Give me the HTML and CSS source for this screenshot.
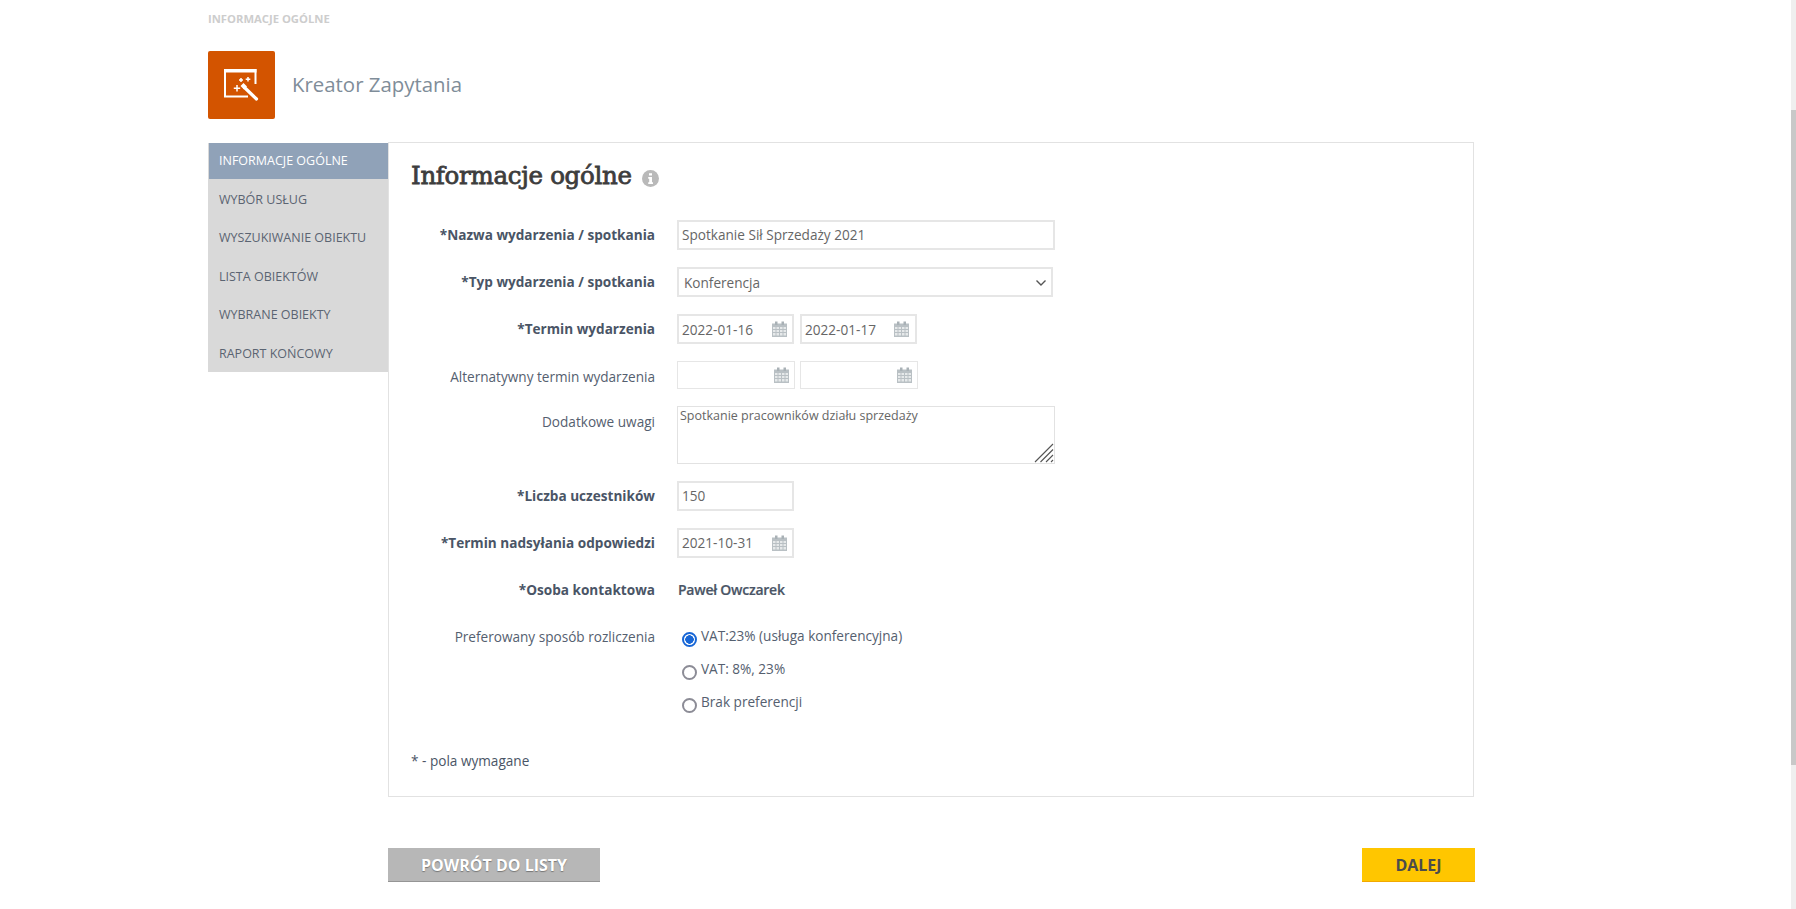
FILE: index.html
```html
<!DOCTYPE html>
<html lang="pl">
<head>
<meta charset="utf-8">
<title>Kreator Zapytania</title>
<link rel="stylesheet" href="styles.css">
</head>
<body>
<div class="page">
  <div class="crumb">INFORMACJE OGÓLNE</div>
  <header class="head">
    <div class="logo">
      <svg width="67" height="68" viewBox="0 0 67 68" fill="none">
        <path d="M17 18v27.500h23M47.500 18v15" stroke="#fff" stroke-width="2"/>
        <path d="M16 18h32.500v3.500H16z" fill="#fff"/>
        <path d="M36.500 36.500L48.500 48" stroke="#fff" stroke-width="3.200" stroke-linecap="round"/>
        <path d="M32.500 35l3-3 3.500 3.500-3 3z" fill="#fff"/>
        <path d="M29 34v6.400M25.800 37.200h6.400M33 27v4M31 29h4M40 26v4.600M37.700 28.300h4.600" stroke="#fff" stroke-width="1.500"/>
      </svg>
    </div>
    <h1 class="app-title">Kreator Zapytania</h1>
  </header>
  <div class="main">
    <nav class="nav">
      <a class="nav-item active">INFORMACJE OGÓLNE</a>
      <a class="nav-item">WYBÓR USŁUG</a>
      <a class="nav-item">WYSZUKIWANIE OBIEKTU</a>
      <a class="nav-item">LISTA OBIEKTÓW</a>
      <a class="nav-item">WYBRANE OBIEKTY</a>
      <a class="nav-item">RAPORT KOŃCOWY</a>
    </nav>
    <section class="panel">
      <h2 class="panel-title">Informacje ogólne
        <svg class="info" width="17" height="17" viewBox="0 0 17 17"><circle cx="8.500" cy="8.500" r="8.500" fill="#b9b9b9"/><path d="M7 3.200h3v2.400H7zM6.200 7h3.800v5.200h1v1.800H6.200v-1.800h1V8.800h-1z" fill="#fff"/></svg>
      </h2>
      <div class="form">
        <div class="row">
          <label class="lbl req">*Nazwa wydarzenia / spotkania</label>
          <input class="inp inp-up w-full" type="text" value="Spotkanie Sił Sprzedaży 2021">
        </div>
        <div class="row">
          <label class="lbl req">*Typ wydarzenia / spotkania</label>
          <div class="sel">
            <span class="sel-text">Konferencja</span>
            <svg width="12" height="8" viewBox="0 0 12 8" fill="none"><path d="M1.500 1.500L6 6l4.500-4.500" stroke="#555" stroke-width="1.400"/></svg>
          </div>
        </div>
        <div class="row">
          <label class="lbl req">*Termin wydarzenia</label>
          <div class="dates">
            <span class="date"><input class="inp" type="text" value="2022-01-16"><svg class="cal" width="15" height="16" viewBox="0 0 15 16"><use href="#cal"/></svg></span>
            <span class="date date-last"><input class="inp" type="text" value="2022-01-17"><svg class="cal" width="15" height="16" viewBox="0 0 15 16"><use href="#cal"/></svg></span>
          </div>
        </div>
        <div class="row row-alt">
          <label class="lbl lbl-down">Alternatywny termin wydarzenia</label>
          <div class="dates dates-alt">
            <span class="date"><input class="inp thin" type="text"><svg class="cal" width="15" height="16" viewBox="0 0 15 16"><use href="#cal"/></svg></span>
            <span class="date"><input class="inp thin" type="text"><svg class="cal" width="15" height="16" viewBox="0 0 15 16"><use href="#cal"/></svg></span>
          </div>
        </div>
        <div class="row row-notes">
          <label class="lbl lbl-top">Dodatkowe uwagi</label>
          <span class="notes">
            <textarea class="area">Spotkanie pracowników działu sprzedaży</textarea>
            <svg class="grip" width="20" height="20" viewBox="0 0 20 20" fill="none"><path d="M1 19L19 1M6.500 19L19 6.500M12 19l7-7M17 19l2-2" stroke="#555" stroke-width="1.100"/></svg>
          </span>
        </div>
        <div class="row">
          <label class="lbl req">*Liczba uczestników</label>
          <input class="inp inp-up w-small" type="text" value="150">
        </div>
        <div class="row">
          <label class="lbl req">*Termin nadsyłania odpowiedzi</label>
          <span class="date"><input class="inp inp-up" type="text" value="2021-10-31"><svg class="cal" width="15" height="16" viewBox="0 0 15 16"><use href="#cal"/></svg></span>
        </div>
        <div class="row row-text">
          <label class="lbl req">*Osoba kontaktowa</label>
          <span class="person">Paweł Owczarek</span>
        </div>
        <div class="row row-radio">
          <label class="lbl lbl-radio">Preferowany sposób rozliczenia</label>
          <div class="radios">
            <label class="radio"><input type="radio" name="vat" checked><span>VAT:23% (usługa konferencyjna)</span></label>
            <label class="radio"><input type="radio" name="vat"><span>VAT: 8%, 23%</span></label>
            <label class="radio"><input type="radio" name="vat"><span>Brak preferencji</span></label>
          </div>
        </div>
      </div>
      <p class="note">* - pola wymagane</p>
    </section>
  </div>
  <div class="actions">
    <a class="btn btn-back">POWRÓT DO LISTY</a>
    <a class="btn btn-next">DALEJ</a>
  </div>
</div>
<div class="scrollbar"><div class="thumb"></div></div>
<svg class="defs" width="0" height="0">
  <symbol id="cal" viewBox="0 0 15 16">
    <path d="M0 2.500h15V16H0z" fill="#b9c0c4"/>
    <path d="M3 0.500h2.500v3.500H3zM9.500 0.500H12v3.500H9.500z" fill="#a9b1b6"/>
    <path d="M1 6h2.500v2H1zM4.500 6H7v2H4.500zM8 6h2.500v2H8zM11.500 6H14v2h-2.500zM1 9h2.500v2H1zM4.500 9H7v2H4.500zM8 9h2.500v2H8zM11.500 9H14v2h-2.500zM1 12h2.500v2.500H1zM4.500 12H7v2.500H4.500zM8 12h2.500v2.500H8zM11.500 12H14v2.500h-2.500z" fill="#e6e9ea"/>
  </symbol>
</svg>
</body>
</html>
```
FILE: styles.css
```css
* { box-sizing: border-box; }
html, body { margin: 0; height: 909px; overflow: hidden; background: #fff; }
body { font-family: "Open Sans", "Liberation Sans", sans-serif; font-size: 13.600px; color: #4a5566; }
.page { width: 1267px; margin-left: 208px; }
.crumb { height: 51px; padding-top: 12px; font-size: 11.250px; line-height: 14px; font-weight: 700; color: #cdcdcd; }
.head { display: flex; align-items: center; gap: 17px; height: 68px; margin-bottom: 23px; }
.logo { width: 67px; height: 68px; background: #d35400; border-radius: 2px; flex: none; }
.logo svg { display: block; }
.app-title { margin: 0 0 2px; font-size: 20.400px; font-weight: 400; color: #7f8d99; }
.main { display: flex; align-items: flex-start; }
.nav { width: 180px; height: 229px; overflow: hidden; margin-top: 1px; background: #d9d9d9; display: flex; flex-direction: column; }
.nav-item { display: block; flex: none; height: 38.400px; padding-left: 11px; font-size: 12.500px; line-height: 38.400px; color: #5b6472; }
.nav-item.active { height: 36px; line-height: 36px; margin: 0 0 2px 1px; padding-left: 10px; background: #90a2b8; color: #fff; }
.panel { width: 1086px; height: 655px; border: 1px solid #e2e2e2; padding-top: 15px; }
.panel-title { margin: 0 0 27px 22px; height: 35px; font-family: "DejaVu Serif", "Liberation Serif", serif; font-size: 24.500px; line-height: 35px; font-weight: 400; -webkit-text-stroke: 0.8px #3d3d3d; color: #3d3d3d; letter-spacing: -0.300px; display: flex; align-items: center; gap: 10px; }
.info { margin-top: 6px; }
.form { display: flex; flex-direction: column; }
.row { display: grid; grid-template-columns: 266px 1fr; column-gap: 22px; align-items: center; height: 30px; margin-bottom: 17px; }
.row-alt { height: 28px; }
.row-notes { height: 58px; align-items: start; }
.lbl { margin-top: -2px; text-align: right; color: #55606f; white-space: nowrap; }
.lbl.req { font-weight: 700; color: #4a5566; }
.lbl-down { padding-top: 4px; }
.lbl-top { padding-top: 8px; }
.inp { display: block; width: 117px; height: 30px; border: 2px solid #e6e6e6; padding: 0 3px; font: 13.600px "Open Sans", sans-serif; color: #666; background: #fff; outline: 0; }
.inp-up { padding-bottom: 2px; }
.inp.thin { width: 118px; height: 28px; border-width: 1px; }
.w-full { width: 378px; }
.w-small { width: 117px; }
.sel { display: flex; align-items: center; justify-content: space-between; width: 376px; height: 30px; border: 2px solid #e6e6e6; padding: 1px 4px 0 5px; color: #666; }
.dates { display: flex; gap: 6px; }
.dates-alt { gap: 5px; }
.date { position: relative; display: block; width: max-content; }
.cal { position: absolute; right: 7px; top: 7px; }
.date-last .cal { right: 8px; }
.dates-alt .cal { right: 6px; top: 6px; }
.notes { position: relative; display: block; width: 378px; height: 58px; }
.area { display: block; width: 378px; height: 58px; border: 1px solid #e2e2e2; padding: 1px 2px; font: 12.500px/16px "Open Sans", sans-serif; color: #666; resize: none; outline: 0; }
.grip { position: absolute; right: 1px; bottom: 1px; }
.row-text { margin-bottom: 0; }
.person { position: relative; top: -1px; margin-left: 1px; font-size: 14px; font-weight: 600; letter-spacing: -0.240px; color: #4a5566; -webkit-text-stroke: 0.2px #4a5566; }
.row-radio { height: auto; align-items: start; margin: 23px 0 0; }
.lbl.lbl-radio { margin-top: -1px; line-height: 19px; }
.radios { display: flex; flex-direction: column; gap: 14px; padding-left: 5px; }
.radio { display: flex; align-items: flex-start; height: 19px; line-height: 19px; color: #55606f; }
.radio input { appearance: none; width: 15px; height: 15px; margin: 4px 4px 0 0; flex: none; border: 2px solid #8c8c96; border-radius: 50%; background: #fff; }
.radio input:checked { border-color: #1766d6; background: radial-gradient(circle, #1766d6 0 4px, #fff 4.500px); }
.radio span { margin-top: -2px; }
.note { margin: 38px 0 0 22px; line-height: 19px; color: #4a5566; }
.actions { display: flex; justify-content: space-between; margin: 51px 0 0 180px; }
.btn { display: block; height: 34px; line-height: 34px; text-align: center; font-size: 16px; font-weight: 700; }
.btn-back { width: 212px; background: #b7b7b7; border-bottom: 1px solid #959595; color: #fff; text-shadow: 0 1px 1px rgba(90,90,90,.7); }
.btn-next { width: 113px; background: #ffc600; border-bottom: 1px solid #f2a900; color: #4c4c4c; }
.scrollbar { position: fixed; right: 0; top: 0; width: 5px; height: 909px; background: #efefef; }
.thumb { position: absolute; top: 110px; left: 0; width: 5px; height: 655px; background: #c8c8c8; }
.defs { position: absolute; }
```
